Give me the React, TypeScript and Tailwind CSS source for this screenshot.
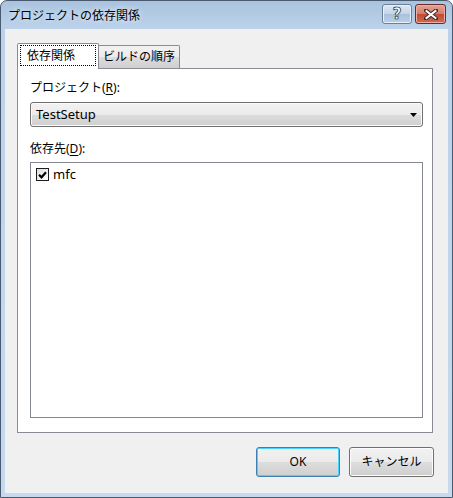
import React from "react";

const font = "font-['Noto_Sans','Noto_Sans_CJK_JP',sans-serif]";

function Btn({ children, def }: { children: React.ReactNode; def?: boolean }) {
  return (
    <div
      className={`h-[30px] rounded-[3px] border flex items-center justify-center text-[12px] text-black bg-[linear-gradient(to_bottom,#f2f2f2_0%,#ebebeb_50%,#dddddd_51%,#cfcfcf_100%)] ${
        def
          ? "w-[84px] border-[#3c7fb1] shadow-[inset_0_0_0_1px_#48d4fc]"
          : "w-[85px] border-[#707070] shadow-[inset_0_0_0_1px_#fcfcfc]"
      }`}
    >
      {children}
    </div>
  );
}

export default function App() {
  return (
    <div className={`${font} w-[453px] h-[498px] flex flex-col border border-[#4a5a6e] rounded-t-[7px] bg-[linear-gradient(to_bottom,#a9c3df_0px,#bcd2ea_28px,#c6d9ee_100%)] px-[4px] pb-[4px] overflow-hidden`}>
      {/* title bar */}
      <div className="h-[28px] flex items-start justify-between pl-[3px] pr-[2px]">
        <div className="mt-[6px] text-[12px] leading-[17px] text-black [text-shadow:0_0_6px_#ffffff]">
          プロジェクトの依存関係
        </div>
        <div className="mt-[3px] flex gap-[3px]">
          <div className="w-[30px] h-[20px] rounded-[3px] border border-[#6d7f98] bg-[linear-gradient(to_bottom,#dbe7f3_0%,#c4d6ea_50%,#a9c1dc_51%,#b9d0e8_100%)] shadow-[inset_0_0_0_1px_#e8f0f8] flex items-center justify-center">
            <span className="font-['DejaVu_Sans',sans-serif] font-bold text-[15px] leading-none text-white [-webkit-text-stroke:0.6px_#2a2a2a] [text-shadow:0_0_1px_#333]">?</span>
          </div>
          <div className="w-[31px] h-[20px] rounded-[3px] border border-[#6a2a22] bg-[linear-gradient(to_bottom,#e3a597_0%,#d67a67_50%,#c24a34_51%,#cf6a52_100%)] shadow-[inset_0_0_0_1px_#eab0a4] flex items-center justify-center">
            <svg width="14" height="11" viewBox="0 0 14 11">
              <path d="M2 1.5 L12 9.5 M12 1.5 L2 9.5" stroke="#3a2a2a" strokeWidth="4" strokeLinecap="square" />
              <path d="M2.5 2 L11.5 9 M11.5 2 L2.5 9" stroke="#ffffff" strokeWidth="2" strokeLinecap="square" />
            </svg>
          </div>
        </div>
      </div>

      {/* client area */}
      <div className="flex-1 bg-[#f0f0f0] flex flex-col pl-[12px] pt-[14px]">
        {/* tabs */}
        <div className="h-[25px] flex items-end relative z-10">
          <div className="w-[82px] h-[26px] -mb-px bg-white border border-b-0 border-[#898c95] rounded-t-[2px] pt-[1px] px-[2px]">
            <div className="h-[21px] border border-dotted border-black flex items-center pl-[6px] text-[12px] leading-[16px] text-black">
              依存関係
            </div>
          </div>
          <div className="w-[81px] h-[23px] border border-l-0 border-b-0 border-[#898c95] rounded-tr-[2px] bg-[linear-gradient(to_bottom,#f2f2f2_0%,#ebebeb_50%,#dddddd_51%,#cfcfcf_100%)] flex items-center pl-[4px] text-[12px] leading-[16px] text-black">
            ビルドの順序
          </div>
        </div>

        {/* panel */}
        <div className="w-[416px] h-[365px] bg-white border border-[#898c95] pl-[12px] pr-[9px] flex flex-col">
          <div className="mt-[10px] h-[17px] text-[12px] leading-[17px] text-black">
            プロジェクト(<span className="underline underline-offset-2">R</span>):
          </div>
          <div className="mt-[6px] h-[25px] rounded-[3px] border border-[#707070] bg-[linear-gradient(to_bottom,#f2f2f2_0%,#ebebeb_50%,#dddddd_51%,#cfcfcf_100%)] shadow-[inset_0_0_0_1px_#fbfbfb] flex items-center justify-between pl-[5px] pr-[5px]">
            <span className="text-[13px] leading-[17px] text-black">TestSetup</span>
            <svg width="7" height="4" viewBox="0 0 7 4" className="mt-[1px]">
              <path d="M0 0 H7 L3.5 4 Z" fill="#000" />
            </svg>
          </div>
          <div className="mt-[13px] h-[17px] text-[12px] leading-[17px] text-black">
            依存先(<span className="underline underline-offset-2">D</span>):
          </div>
          <div className="mt-[5px] h-[256px] border border-[#828790] bg-white pl-[5px] pt-[4px]">
            <div className="flex items-center h-[15px] gap-[4px]">
              <div className="w-[13px] h-[13px] border border-[#1c1c1c] bg-[linear-gradient(135deg,#dcdcdc,#ffffff)] flex items-center justify-center">
                <svg width="9" height="8" viewBox="0 0 9 8">
                  <path d="M1 3.8 L3.5 6.3 L8 1.2" stroke="#000" strokeWidth="2.2" fill="none" />
                </svg>
              </div>
              <span className="text-[13px] leading-[15px] text-black">mfc</span>
            </div>
          </div>
        </div>

        {/* buttons */}
        <div className="mt-[14px] flex justify-end gap-[9px] pr-[14px]">
          <Btn def>OK</Btn>
          <Btn>キャンセル</Btn>
        </div>
      </div>
    </div>
  );
}
